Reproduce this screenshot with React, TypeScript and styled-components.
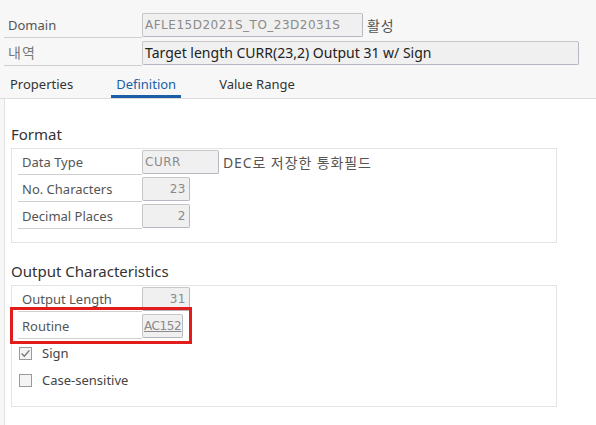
import React from 'react';
import styled, { createGlobalStyle } from 'styled-components';

const GlobalStyle = createGlobalStyle`
  html, body {
    margin: 0;
    padding: 0;
    background: #f7f7f7;
  }
  body {
    font-family: 'Noto Sans', 'Noto Sans CJK KR', sans-serif;
    font-size: 13px;
    color: #333;
  }
`;

const Screen = styled.div`
  width: 596px;
  height: 425px;
  overflow: hidden;
  background: #f7f7f7;
  display: flex;
  flex-direction: column;
  & > * {
    flex-shrink: 0;
  }
`;

const Header = styled.div`
  display: flex;
  flex-direction: column;
  gap: 4px;
  padding: 13px 0 0 4px;
`;

const HeadRow = styled.div`
  display: flex;
  align-items: center;
  height: 24px;
`;

const HeadLabel = styled.div<{ $ko?: boolean }>`
  width: 134px;
  height: 24px;
  line-height: 24px;
  padding-left: 4px;
  border-bottom: 1px solid #cfcfcf;
  box-sizing: content-box;
  color: ${(p) => (p.$ko ? '#777' : '#555')};
  font-size: ${(p) => (p.$ko ? '14px' : '13px')};
  letter-spacing: ${(p) => (p.$ko ? '1px' : '0')};
`;

const Field = styled.div<{ $w: number; $align?: string; $dark?: boolean; $link?: boolean }>`
  width: ${(p) => p.$w}px;
  height: 24px;
  box-sizing: border-box;
  border: 1px solid #c6c6c6;
  border-right-color: #b4b8c0;
  border-bottom-color: #b4b8c0;
  border-radius: 2px;
  background: #f0f0f0;
  padding: 0 3px 0 ${(p) => (p.$link ? '1px' : '2px')};
  line-height: 22px;
  text-align: ${(p) => p.$align || 'left'};
  color: ${(p) => (p.$dark ? '#222' : '#8a8a8a')};
  font-family: ${(p) => (p.$dark ? "'Noto Sans', 'Noto Sans CJK KR', sans-serif" : "'DejaVu Sans', sans-serif")};
  font-size: ${(p) => (p.$dark ? '14px' : '12px')};
  letter-spacing: ${(p) => (p.$dark ? '0' : p.$link ? '-0.4px' : '0.5px')};
  text-decoration: ${(p) => (p.$link ? 'underline' : 'none')};
  white-space: nowrap;
  overflow: hidden;
`;

const Suffix = styled.span`
  margin-left: 4px;
  color: #555;
  font-size: 14px;
  letter-spacing: 0.9px;
`;

const TabBar = styled.div`
  display: flex;
  gap: 33px;
  padding: 0 0 0 5px;
  height: 34px;
  box-sizing: border-box;
  border-bottom: 1px solid #dcdcdc;
`;

const Tab = styled.div<{ $active?: boolean }>`
  padding: 8px 5px 0;
  height: 100%;
  display: flex;
  align-items: center;
  box-sizing: border-box;
  border-bottom: 3px solid ${(p) => (p.$active ? '#1a5ea8' : 'transparent')};
  color: ${(p) => (p.$active ? '#1a5ea8' : '#333')};
  font-size: 13px;
`;

const Panel = styled.div`
  flex: 1;
  margin-left: 4px;
  background: #fff;
  border-left: 1px solid #e2e2e2;
  padding: 24px 0 0 6px;
  display: flex;
  flex-direction: column;
`;

const SectionTitle = styled.div`
  font-size: 15px;
  color: #333;
  height: 22px;
  line-height: 22px;
  margin-bottom: 3px;
`;

const Group = styled.div<{ $h: number }>`
  width: 546px;
  height: ${(p) => p.$h}px;
  box-sizing: border-box;
  border: 1px solid #e4e4e4;
  padding: 1px 0 0 6px;
  display: flex;
  flex-direction: column;
  gap: 3px;
  margin-bottom: 17px;
`;

const Row = styled.div<{ $marked?: boolean }>`
  position: relative;
  display: flex;
  align-items: center;
  height: 24px;

  ${(p) =>
    p.$marked &&
    `
    &::after {
      content: '';
      position: absolute;
      left: -8px;
      top: -7px;
      width: 182px;
      height: 37px;
      box-sizing: border-box;
      border: 3px solid #e21b1b;
      pointer-events: none;
    }
  `}
`;

const Label = styled.div`
  width: 120px;
  height: 24px;
  line-height: 24px;
  padding-left: 4px;
  border-bottom: 1px solid #cfcfcf;
  color: #555;
`;

const CheckRow = styled.label`
  display: flex;
  align-items: center;
  height: 24px;
  padding-left: 1px;
  color: #444;
`;

const Box = styled.span`
  width: 13px;
  height: 13px;
  box-sizing: border-box;
  border: 1px solid #9a9a9a;
  background: #f4f4f4;
  margin-right: 10px;
  display: flex;
  align-items: center;
  justify-content: center;
`;

const Check = ({ on, label }: { on?: boolean; label: string }) => (
  <CheckRow>
    <Box>
      {on && (
        <svg width="11" height="11" viewBox="0 0 11 11">
          <path d="M1.6 5.6 L4.3 8.3 L9.4 2.4" fill="none" stroke="#777" strokeWidth="1.4" />
        </svg>
      )}
    </Box>
    {label}
  </CheckRow>
);

export default function App() {
  return (
    <Screen>
      <GlobalStyle />
      <Header>
        <HeadRow>
          <HeadLabel>Domain</HeadLabel>
          <Field $w={221}>AFLE15D2021S_TO_23D2031S</Field>
          <Suffix>활성</Suffix>
        </HeadRow>
        <HeadRow>
          <HeadLabel $ko>내역</HeadLabel>
          <Field $w={437} $dark>
            Target length CURR(23,2) Output 31 w/ Sign
          </Field>
        </HeadRow>
      </Header>

      <TabBar>
        <Tab>Properties</Tab>
        <Tab $active>Definition</Tab>
        <Tab>Value Range</Tab>
      </TabBar>

      <Panel>
        <SectionTitle>Format</SectionTitle>
        <Group $h={95}>
          <Row>
            <Label>Data Type</Label>
            <Field $w={77}>CURR</Field>
            <Suffix>DEC로 저장한 통화필드</Suffix>
          </Row>
          <Row>
            <Label>No. Characters</Label>
            <Field $w={48} $align="right">23</Field>
          </Row>
          <Row>
            <Label>Decimal Places</Label>
            <Field $w={48} $align="right">2</Field>
          </Row>
        </Group>

        <SectionTitle>Output Characteristics</SectionTitle>
        <Group $h={122}>
          <Row>
            <Label>Output Length</Label>
            <Field $w={48} $align="right">31</Field>
          </Row>
          <Row $marked>
            <Label>Routine</Label>
            <Field $w={41} $link>AC152</Field>
          </Row>
          <Check on label="Sign" />
          <Check label="Case-sensitive" />
        </Group>
      </Panel>
    </Screen>
  );
}
